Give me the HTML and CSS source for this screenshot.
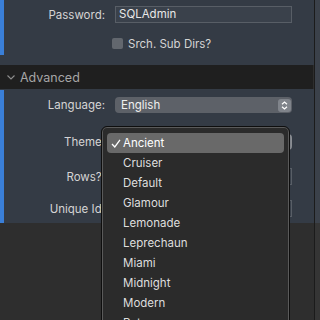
FILE: index.html
```html
<!DOCTYPE html>
<html lang="en">
<head>
    <meta charset="UTF-8">
    <title>preferences</title>
    <link rel="stylesheet" href="styles.css">
</head>
<body>
    <div id="window">
        <div id="main">
            <div class="panel top">
                <div class="strip">
                    <div class="row pw">
                        <div class="label">Password:</div>
                        <div class="field">SQLAdmin</div>
                    </div>
                    <div class="row chk">
                        <div class="label"></div>
                        <span class="box"></span>
                        <span class="chk_text">Srch. Sub Dirs?</span>
                    </div>
                </div>
            </div>

            <div id="header">
                <svg class="chev" width="8" height="5" viewBox="0 0 8 5"><path d="M0.5 0.5 L4 4 L7.5 0.5" fill="none" stroke="#8e8e8e" stroke-width="1.1"/></svg>
                <span>Advanced</span>
            </div>

            <div class="panel adv">
                <div class="strip">
                    <div class="row lang">
                        <div class="label">Language:</div>
                        <div class="select">
                            <span>English</span>
                            <span class="stepper">
                                <svg width="7" height="9" viewBox="0 0 7 9"><path d="M1 3.2 L3.5 1 L6 3.2 M1 5.8 L3.5 8 L6 5.8" fill="none" stroke="#fff" stroke-width="1.2"/></svg>
                            </span>
                        </div>
                    </div>
                    <div class="row theme">
                        <div class="label">Theme:</div>
                        <div class="select"><span></span><span class="stepper"></span></div>
                    </div>
                    <div class="row rows">
                        <div class="label">Rows?:</div>
                        <div class="field"></div>
                    </div>
                    <div class="row uid">
                        <div class="label">Unique Id:</div>
                        <div class="field"></div>
                    </div>
                </div>
            </div>
        </div>
        <div id="edge"></div>
    </div>

    <div id="menu">
        <div class="item on">
            <svg class="tick" width="10" height="9" viewBox="0 0 10 9"><path d="M1 5 L3.8 8 L9 0.8" fill="none" stroke="#fff" stroke-width="1.3"/></svg>
            Ancient
        </div>
        <div class="item">Cruiser</div>
        <div class="item">Default</div>
        <div class="item">Glamour</div>
        <div class="item">Lemonade</div>
        <div class="item">Leprechaun</div>
        <div class="item">Miami</div>
        <div class="item">Midnight</div>
        <div class="item">Modern</div>
        <div class="item">Retro</div>
    </div>
</body>
</html>
```

FILE: styles.css
```css
*{
    margin: 0;
    padding: 0;
    box-sizing: border-box;
}
body{
    background-color: #2e2e2e;
    font-family: Inter, "Liberation Sans", sans-serif;
    font-size: 11.5px;
    color: #d4d4d4;
    width: 320px;
    height: 320px;
    overflow: hidden;
    position: relative;
}
#window{
    display: flex;
    height: 320px;
}
#main{
    width: 315px;
    border-right: 1px solid #1b1b1b;
}
#edge{
    flex: 1;
    background: linear-gradient(#3b414a 0, #3b414a 223px, #353535 223px);
}
.panel{
    background-color: #343b45;
}
.top{
    padding-bottom: 10px;
}
.strip{
    border-left: 4px solid #3a7fd8;
    padding-right: 22px;
}
.top .strip{
    padding-top: 6px;
    padding-bottom: 6px;
}
.adv{
    padding-top: 1px;
}
.adv .strip{
    padding-top: 7px;
    padding-bottom: 6px;
}
.row{
    display: flex;
    align-items: center;
}
.label{
    width: 101px;
    text-align: right;
    margin-right: 10px;
    white-space: nowrap;
}
.field{
    flex: 1;
    height: 17px;
    border: 1px solid #585e66;
    background-color: #3a414b;
    color: #e8e8e8;
    padding-left: 3px;
    line-height: 15px;
}
.pw{
    height: 17px;
}
.chk{
    margin-top: 15px;
    height: 11px;
}
.box{
    width: 11px;
    height: 11px;
    border-radius: 2px;
    background-color: #62676e;
    margin-left: -3px;
}
.chk_text{
    margin-left: 5px;
}
#header{
    height: 24px;
    background-color: #1f1f1f;
    margin-right: 1px;
    display: flex;
    align-items: center;
    padding-left: 7px;
    color: #a6a6a6;
    font-size: 12.5px;
}
.chev{
    margin-right: 5px;
    margin-top: 1px;
}
.select{
    flex: 1;
    height: 16px;
    border-radius: 4px;
    background-color: #5d6168;
    color: #f0f0f0;
    display: flex;
    align-items: center;
    justify-content: space-between;
    padding-left: 6px;
    padding-right: 1px;
}
.stepper{
    width: 13px;
    height: 13px;
    border-radius: 3px;
    background-color: #80848b;
    display: flex;
    align-items: center;
    justify-content: center;
}
.lang{
    height: 16px;
}
.theme{
    margin-top: 21px;
    height: 16px;
}
.theme .select{
    background-color: #8a8d92;
}
.rows{
    margin-top: 18px;
    height: 17px;
}
.uid{
    margin-top: 15px;
    height: 17px;
}
#menu{
    position: absolute;
    left: 101px;
    top: 126px;
    width: 189px;
    height: 230px;
    background-color: #2b2b2b;
    border: 1px solid #0e0e0e;
    border-radius: 6px;
    box-shadow: inset 0 0 0 1px #5a5a5a;
    padding: 6px 5px;
}
.item{
    height: 20px;
    line-height: 20px;
    padding-left: 16px;
    color: #dedede;
    font-size: 11.5px;
    border-radius: 4px;
    position: relative;
}
.item.on{
    background-color: #696969;
    color: #ffffff;
}
.tick{
    position: absolute;
    left: 4px;
    top: 6px;
}
```
